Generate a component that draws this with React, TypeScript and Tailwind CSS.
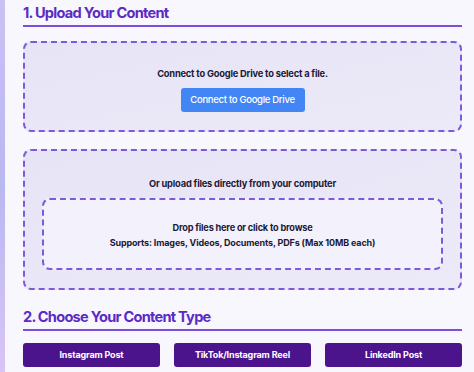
import React from "react";

export default function App() {
  const font = { fontFamily: "Inter, 'Noto Sans', sans-serif" };
  return (
    <div className="flex h-[372px] w-[474px] overflow-hidden" style={font}>
      <div className="w-[5px] shrink-0 bg-gradient-to-b from-[#cbc0f6] via-[#b9b8f0] to-[#d8c4f6]" />
      <div className="flex-1 bg-[#f7f7fd] pl-[18px] pr-[12px] pt-[2px]">
        <h2 className="text-[14.6px] font-bold leading-[22px] tracking-[-0.75px] text-[#5b2bc4]">1. Upload Your Content</h2>
        <div className="mt-[1px] h-[2px] bg-[#7b4fdc]" />
        <div className="mt-[14px] flex h-[91px] flex-col items-center rounded-[8px] border-2 border-dashed border-[#7c5ad9] bg-gradient-to-br from-[#e7e4f6] to-[#eceaf8] pt-[24px]">
          <p className="text-[9.3px] font-bold leading-[13px] tracking-[-0.2px] text-[#1d1936]">Connect to Google Drive to select a file.</p>
          <button className="mt-[8px] h-[24px] w-[124px] rounded-[3px] bg-[#4285f4] text-[9.5px] font-medium tracking-[-0.3px] text-white">Connect to Google Drive</button>
        </div>
        <div className="mt-[17px] flex h-[141px] flex-col items-center rounded-[8px] border-2 border-dashed border-[#7c5ad9] bg-gradient-to-br from-[#e7e4f6] to-[#eceaf8] px-[17px] pt-[26px]">
          <p className="text-[9.3px] font-bold leading-[13px] tracking-[-0.2px] text-[#1d1936]">Or upload files directly from your computer</p>
          <div className="mt-[8px] flex h-[72px] w-full flex-col items-center rounded-[8px] border-2 border-dashed border-[#7c5ad9] bg-[#f3f2fc] pt-[21px]">
            <p className="text-[9.2px] font-bold leading-[13px] tracking-[-0.2px] text-[#1d1936]">Drop files here or click to browse</p>
            <p className="mt-[3px] text-[9px] font-bold leading-[11px] tracking-[-0.15px] text-[#1d1936]">Supports: Images, Videos, Documents, PDFs (Max 10MB each)</p>
          </div>
        </div>
        <h2 className="mt-[16px] text-[14.6px] font-bold leading-[22px] tracking-[-0.75px] text-[#5b2bc4]">2. Choose Your Content Type</h2>
        <div className="mt-[1px] h-[2px] bg-[#7b4fdc]" />
        <div className="mt-[12px] grid grid-cols-3 gap-[14px]">
          {["Instagram Post", "TikTok/Instagram Reel", "LinkedIn Post"].map((t) => (
            <button key={t} className="h-[24px] rounded-[3px] bg-[#4b148d] text-[9px] font-bold tracking-[-0.15px] text-white">{t}</button>
          ))}
        </div>
      </div>
    </div>
  );
}
